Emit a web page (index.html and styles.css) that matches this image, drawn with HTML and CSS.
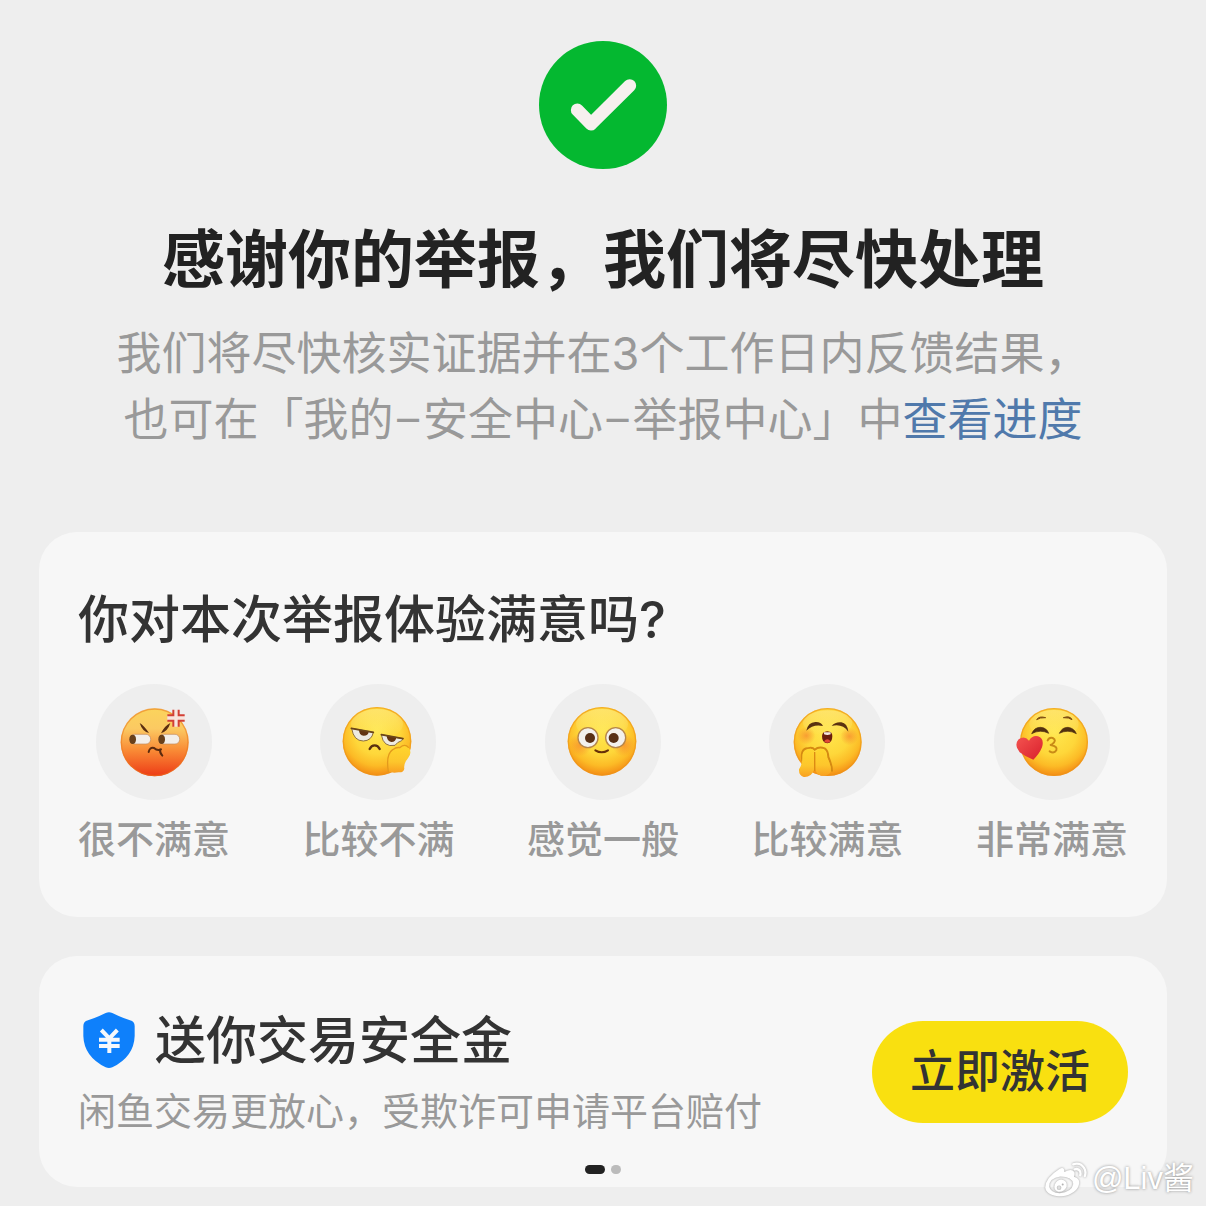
FILE: index.html
```
<!DOCTYPE html>
<html lang="zh-CN">
<head>
  <meta charset="UTF-8">
  <meta name="viewport" content="width=device-width, initial-scale=1.0">
  <title>举报成功</title>
  <link rel="stylesheet" href="styles.css">
</head>
<body>
  <main class="page">
    <header class="result">
      <svg class="result-icon" viewBox="57 63 384 384" aria-hidden="true">
        <circle cx="249" cy="255" r="192" fill="#04b830"/>
        <path d="M172 270 L213 312 L329 197" fill="none" stroke="#f6f0ee" stroke-width="39" stroke-linecap="round" stroke-linejoin="round"/>
      </svg>
      <h1>感谢你的举报，我们将尽快处理</h1>
      <p>我们将尽快核实证据并在3个工作日内反馈结果，<br>也可在「我的<span class="dash">–</span>安全中心<span class="dash">–</span>举报中心」中<a href="#">查看进度</a></p>
    </header>

    <section class="card survey">
      <h2>你对本次举报体验满意吗?</h2>
      <div class="options">
        <button class="option" type="button">
          <svg class="face" viewBox="48 38 348 348" aria-hidden="true">
            <defs>
              <linearGradient id="angry" x1="0" y1="0" x2="0" y2="1">
                <stop offset="0" stop-color="#fbd45c"/>
                <stop offset=".3" stop-color="#fbc962"/>
                <stop offset=".62" stop-color="#f98a35"/>
                <stop offset="1" stop-color="#ed3a16"/>
              </linearGradient>
              <radialGradient id="yellow" cx=".5" cy=".36" r=".66">
                <stop offset="0" stop-color="#ffe74e"/>
                <stop offset=".5" stop-color="#fed73a"/>
                <stop offset=".75" stop-color="#fcbb26"/>
                <stop offset="1" stop-color="#f28412"/>
              </radialGradient>
              <linearGradient id="shine" x1="0" y1="0" x2="0" y2="1">
                <stop offset="0" stop-color="#fff6b0" stop-opacity=".4"/>
                <stop offset="1" stop-color="#fff6b0" stop-opacity="0"/>
              </linearGradient>
              <linearGradient id="hand" x1="0" y1="0" x2="0" y2="1">
                <stop offset="0" stop-color="#ffd62e"/>
                <stop offset=".6" stop-color="#fdc62c"/>
                <stop offset="1" stop-color="#f9a020"/>
              </linearGradient>
              <radialGradient id="blush">
                <stop offset="0" stop-color="#f5772c" stop-opacity=".6"/>
                <stop offset="1" stop-color="#f5772c" stop-opacity="0"/>
              </radialGradient>
              <linearGradient id="heart" x1="0" y1="0" x2="1" y2="1">
                <stop offset="0" stop-color="#f45450"/>
                <stop offset="1" stop-color="#d91f2c"/>
              </linearGradient>
            </defs>
            <circle cx="224" cy="213" r="102" fill="url(#angry)"/>
            <circle cx="224" cy="213" r="100" fill="none" stroke="#e9781c" stroke-opacity=".55" stroke-width="4"/>
            <path d="M179 155 Q192 163 207 185 Q187 181 179 155Z M271 155 Q254 163 243 186 Q264 179 271 155Z" fill="#5b2e10"/>
            <rect x="150" y="189" width="62" height="29" rx="14" fill="#f3eee9" stroke="#c18a5a" stroke-width="2"/>
            <rect x="237" y="189" width="62" height="29" rx="14" fill="#f3eee9" stroke="#c18a5a" stroke-width="2"/>
            <ellipse cx="158" cy="204" rx="10" ry="14" fill="#69401b"/>
            <ellipse cx="245" cy="204" rx="10" ry="14" fill="#69401b"/>
            <path d="M206 242 Q209 227 222 230 Q232 239 243 234 M241 234 Q238 244 247 253" fill="none" stroke="#5b2a0e" stroke-width="6" stroke-linecap="round"/>
            <path d="M262 132 H281 V115 H295 V132 H314 V148 H295 V166 H281 V148 H262Z" fill="#f8e4dd"/>
            <path d="M280 115 V132 H262 M296 115 V132 H314 M262 148 H280 V166 M314 148 H296 V166" fill="none" stroke="#d23f35" stroke-width="6"/>
          </svg>
          <span>很不满意</span>
        </button>
        <button class="option" type="button">
          <svg class="face" viewBox="48 38 348 348" aria-hidden="true">
            <circle cx="219" cy="210" r="103" fill="url(#yellow)"/>
            <ellipse cx="219" cy="158" rx="78" ry="45" fill="url(#shine)"/>
            <circle cx="219" cy="210" r="101" fill="none" stroke="#ec9418" stroke-opacity=".6" stroke-width="4"/>
            <path d="M143 171 L208 183 Q203 208 178 209 Q149 209 143 171Z" fill="#eeebe2" stroke="#8c7040" stroke-width="3"/>
            <path d="M232 190 L297 202 L293 208 Q280 212 273 222 Q238 229 232 190Z" fill="#eeebe2" stroke="#8c7040" stroke-width="3"/>
            <path d="M165 175 L194 181 Q193 193 179 193 Q165 191 165 175Z M248 193 L277 198 Q276 212 262 212 Q249 209 248 193Z" fill="#643511"/>
            <path d="M142 171 L208 183 M232 190 L297 202" stroke="#6b4518" stroke-width="5" stroke-linecap="round"/>
            <path d="M197 233 Q202 222 212 222 Q222 222 227 233" fill="none" stroke="#5a3010" stroke-width="7" stroke-linecap="round"/>
            <path d="M253 300 Q245 249 266 235 Q277 227 287 229 Q303 216 313 228 Q326 243 312 261 Q298 277 301 292 Q299 304 284 303 Q263 306 253 300Z" fill="url(#hand)"/>
            <path d="M253 300 Q245 249 266 235 Q277 227 287 229 Q303 216 313 228" fill="none" stroke="#e39a1c" stroke-width="4" stroke-linecap="round"/>
          </svg>
          <span>比较不满</span>
        </button>
        <button class="option" type="button">
          <svg class="face" viewBox="51 38 348 348" aria-hidden="true">
            <circle cx="222" cy="210" r="103" fill="url(#yellow)"/>
            <ellipse cx="222" cy="158" rx="78" ry="45" fill="url(#shine)"/>
            <circle cx="222" cy="210" r="101" fill="none" stroke="#ec9418" stroke-opacity=".6" stroke-width="4"/>
            <circle cx="157" cy="221" r="34" fill="url(#blush)"/>
            <circle cx="287" cy="221" r="34" fill="url(#blush)"/>
            <circle cx="180" cy="199" r="30" fill="#f3f1ed" stroke="#b6864a" stroke-width="4"/>
            <circle cx="263" cy="199" r="30" fill="#f3f1ed" stroke="#b6864a" stroke-width="4"/>
            <circle cx="186" cy="200" r="15" fill="#583016"/>
            <circle cx="257" cy="200" r="15" fill="#583016"/>
            <path d="M202 237 Q221 249 240 237" fill="none" stroke="#673008" stroke-width="6" stroke-linecap="round"/>
          </svg>
          <span>感觉一般</span>
        </button>
        <button class="option" type="button">
          <svg class="face" viewBox="51 38 348 348" aria-hidden="true">
            <circle cx="227" cy="212" r="102" fill="url(#yellow)"/>
            <ellipse cx="227" cy="155" rx="74" ry="38" fill="url(#shine)"/>
            <circle cx="227" cy="212" r="100" fill="none" stroke="#ec9418" stroke-opacity=".6" stroke-width="4"/>
            <circle cx="163" cy="193" r="27" fill="url(#blush)"/>
            <circle cx="292" cy="195" r="27" fill="url(#blush)"/>
            <path d="M163 178 Q168 153 190 152 Q207 151 213 164 Q184 157 163 178Z M239 164 Q250 151 268 153 Q286 156 289 181 Q271 156 239 164Z" fill="#5a3210"/>
            <path d="M226 180 Q241 181 241 194 Q241 215 226 216 Q210 215 210 194 Q211 181 226 180Z" fill="#6b1d0d"/>
            <path d="M216 183 H236 V189 Q226 193 216 189Z" fill="#f2e7df"/>
            <path d="M216 210 Q226 198 236 210 Q226 219 216 210Z" fill="#e34a36"/>
            <path d="M151 268 Q144 232 167 231 Q181 226 188 235 Q200 225 218 231 Q228 237 229 257 Q240 282 240 298" fill="none" stroke="#d58a12" stroke-width="6" stroke-linecap="round"/>
            <path d="M160 237 Q180 226 187 242 L186 296 Q177 319 155 317 Q140 313 141 294 Q151 280 151 258 Q150 243 160 237Z" fill="url(#hand)"/>
            <path d="M192 240 Q205 229 217 236 Q225 242 225 260 Q237 279 237 300 Q231 315 208 313 Q191 310 190 291Z" fill="url(#hand)"/>
            <path d="M188 242 V299" stroke="#dc8a14" stroke-width="4"/>
          </svg>
          <span>比较满意</span>
        </button>
        <button class="option" type="button">
          <svg class="face" viewBox="52 38 348 348" aria-hidden="true">
            <circle cx="232" cy="212" r="102" fill="url(#yellow)"/>
            <ellipse cx="232" cy="158" rx="74" ry="42" fill="url(#shine)"/>
            <circle cx="232" cy="212" r="100" fill="none" stroke="#ec9418" stroke-opacity=".6" stroke-width="4"/>
            <path d="M180 145 Q187 133 207 139 Q190 138 180 145Z M260 139 Q280 132 286 145 Q277 138 260 139Z" fill="#7d4c12" stroke="#7d4c12" stroke-width="3"/>
            <path d="M165 187 Q174 167 192 168 Q210 169 216 186 Q191 173 165 187Z M248 186 Q257 167 274 168 Q292 170 299 187 Q274 173 248 186Z" fill="#523010" stroke="#523010" stroke-width="2"/>
            <path d="M213 207 Q218 197 228 200 Q242 207 226 219 L222 221 Q244 225 239 237 Q232 248 219 240" fill="none" stroke="#c98b16" stroke-width="6" stroke-linecap="round" stroke-linejoin="round"/>
            <path d="M170 265 Q145 256 129 243 Q111 220 126 204 Q143 191 157 208 Q167 191 184 195 Q204 202 196 228 Q188 248 170 265Z" fill="url(#heart)"/>
          </svg>
          <span>非常满意</span>
        </button>
      </div>
    </section>

    <section class="card promo">
      <div class="promo-row">
        <div class="promo-text">
          <h2>
            <svg class="shield" viewBox="70 60 156 174" aria-hidden="true">
              <path d="M138 63 Q148 58 158 63 Q184 76 211 85 Q225 89 225 102 V132 Q223 194 158 226 Q148 230 138 226 Q73 194 71 132 V102 Q71 89 85 85 Q112 76 138 63Z" fill="#0e80fb"/>
              <path d="M125 114 L149 139 L173 114 M118 143 H180 M118 162 H180 M149 138 V183" fill="none" stroke="#f5f8fb" stroke-width="12"/>
            </svg>
            送你交易安全金
          </h2>
          <p>闲鱼交易更放心，受欺诈可申请平台赔付</p>
        </div>
        <button class="activate" type="button">立即激活</button>
      </div>
      <div class="dots">
        <span class="dot active"></span>
        <span class="dot"></span>
      </div>
    </section>

    <div class="watermark">
      <svg viewBox="45 52 132 112" aria-hidden="true">
        <path fill-rule="evenodd" d="M91 76 Q106 67 106 85 Q128 73 136 85 Q139 91 135 100 Q152 104 151 119 Q146 151 98 159 Q52 158 48 132 Q49 102 91 76Z M94 99 Q60 104 60 129 Q64 148 92 150 Q128 147 133 122 Q131 99 94 99Z" fill="#fff"/>
        <path fill-rule="evenodd" d="M96 108 Q116 111 113 130 Q105 147 87 145 Q72 139 77 123 Q83 109 96 108Z M90 126 A7 7 0 1 0 90 140 A7 7 0 1 0 90 126Z M101 120 A3 3 0 1 0 101 126 A3 3 0 1 0 101 120Z" fill="#fff"/>
        <path d="M133 62 Q153 55 165 72 Q173 84 168 98 M137 77 Q149 74 154 84 Q156 90 154 95" fill="none" stroke="#fff" stroke-width="7" stroke-linecap="round"/>
      </svg>
      <span>@Liv酱</span>
    </div>
  </main>
</body>
</html>
```
FILE: styles.css
```
* {
  box-sizing: border-box;
}
body {
  margin: 0;
  background: #eee;
  color: #333;
  font-family: Inter, "Noto Sans CJK SC", sans-serif;
}
h1, h2, p {
  margin: 0;
}
button {
  border: none;
  padding: 0;
  font-family: inherit;
  cursor: pointer;
}
.page {
  position: relative;
  padding: 41px 39px 20px;
}
.result {
  text-align: center;
}
.result-icon {
  display: block;
  width: 128px;
  height: 128px;
  margin: 0 auto 44px;
}
.result h1 {
  font-family: "Noto Sans CJK SC", sans-serif;
  font-size: 63px;
  line-height: 84px;
  font-weight: 700;
  color: #222;
}
.result p {
  margin-top: 24px;
  font-size: 45px;
  line-height: 66px;
  color: #999;
}
.result a {
  color: #5079ab;
  text-decoration: none;
}
.dash {
  font-family: Roboto, sans-serif;
}
.card {
  background: #f7f7f7;
  border-radius: 38px;
}
.card h2 {
  font-size: 51px;
  line-height: 72px;
  font-weight: 500;
}
.survey {
  margin-top: 78px;
  padding: 52px 39px 51px;
}
.options {
  display: flex;
  justify-content: space-between;
  margin-top: 28px;
}
.option {
  display: flex;
  flex-direction: column;
  align-items: center;
  gap: 12px;
  background: none;
  font-size: 38px;
  line-height: 54px;
  font-weight: 500;
  color: #999;
}
.face {
  width: 116px;
  height: 116px;
  border-radius: 50%;
  background: #eee;
}
.promo {
  margin-top: 39px;
  padding: 49px 39px 13px;
}
.promo-row {
  display: flex;
  align-items: center;
  justify-content: space-between;
}
.promo h2 {
  display: flex;
  align-items: center;
  gap: 20px;
  padding-left: 5px;
}
.shield {
  width: 52px;
  height: 58px;
}
.promo p {
  margin-top: 7px;
  font-size: 38px;
  line-height: 54px;
  color: #999;
}
.activate {
  padding: 18px 38px;
  border-radius: 52px;
  background: #f9e010;
  color: #333;
  font-size: 45px;
  line-height: 66px;
  font-weight: 500;
}
.dots {
  display: flex;
  justify-content: center;
  gap: 6px;
  margin-top: 27px;
}
.dot {
  width: 10px;
  height: 9px;
  border-radius: 5px;
  background: #bbb;
}
.dot.active {
  width: 20px;
  background: #222;
}
/* signature over the bottom right corner */
.watermark {
  position: absolute;
  right: 12px;
  bottom: 8px;
  display: flex;
  align-items: center;
  gap: 4px;
  color: #fff;
  font-family: "Liberation Sans", "Noto Sans CJK SC", sans-serif;
  font-size: 31px;
  line-height: 40px;
  text-shadow: 0 0 3px #888;
}
.watermark svg {
  width: 44px;
  height: 37px;
  overflow: visible;
  filter: drop-shadow(0 0 1px #999);
}
```
